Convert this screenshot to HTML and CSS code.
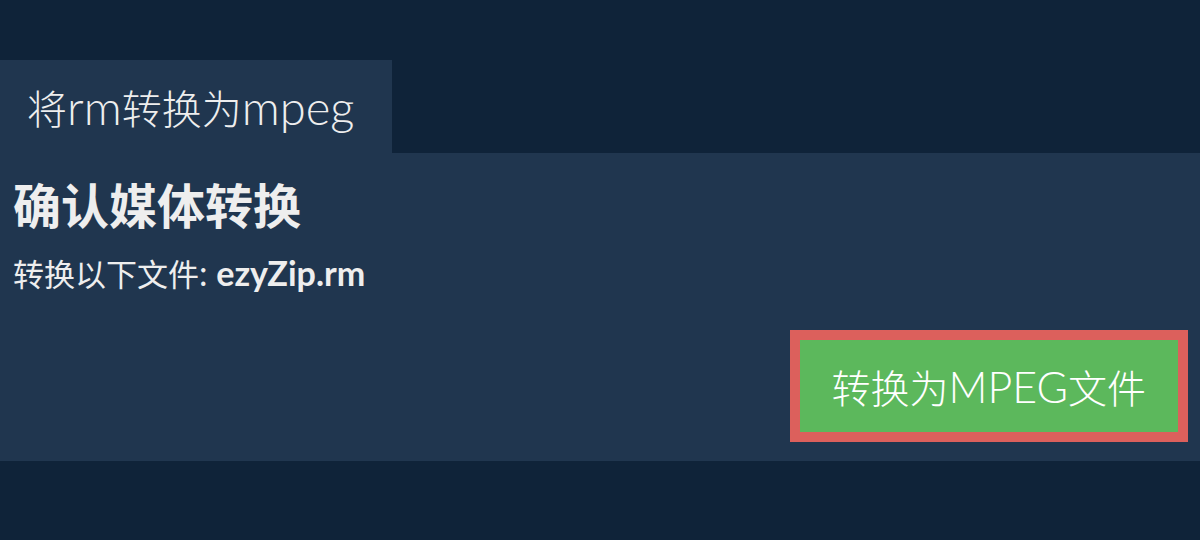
FILE: index.html
```html
<!DOCTYPE html>
<html lang="zh">
<head>
  <meta charset="UTF-8">
  <meta name="viewport" content="width=device-width, initial-scale=1.0">
  <title>将rm转换为mpeg</title>
  <link rel="stylesheet" href="styles.css">
</head>
<body>
  <div class="tabs">
    <div class="tab">将<span class="latin">rm</span>转换为<span class="latin">mpeg</span></div>
  </div>
  <div class="panel">
    <h1 class="title">确认媒体转换</h1>
    <p class="file-line">转换以下文件<span class="latin">: <b class="file-name">ezyZip.rm</b></span></p>
    <div class="actions">
      <button class="convert-btn" type="button">转换为<span class="latin">MPEG</span>文件</button>
    </div>
  </div>
</body>
</html>
```

FILE: styles.css
```css
body {
  margin: 0;
  background-color: #0f2339;
  color: #eeeeee;
  font-family: "Lato", "Noto Sans CJK SC", sans-serif;
}
/* latin runs are drawn a bit larger than the CJK glyphs */
.latin {
  font-size: 1.1em;
}
.tabs {
  padding-top: 60px;
  display: flex;
}
.tab {
  background-color: #20364f;
  height: 93px;
  padding: 0 38px 0 27px;
  display: flex;
  align-items: center;
  font-size: 40px;
  font-weight: 300;
}
.tab .latin {
  font-size: 1.18em;
}
.panel {
  background-color: #20364f;
  padding: 25px 12px 19px 13px;
}
.title {
  margin: 0;
  font-size: 48px;
  line-height: 56px;
  font-weight: 700;
}
.file-line {
  margin: 19px 0 0;
  font-size: 31px;
  line-height: 40px;
}
.file-name {
  font-weight: 700;
}
.actions {
  display: flex;
  justify-content: flex-end;
  margin-top: 36px;
}
.convert-btn {
  background-color: #5cb85c;
  color: #ffffff;
  border: 10px solid #dc605c;
  height: 112px;
  padding: 0 32px;
  font-family: "Lato", "Noto Sans CJK SC", sans-serif;
  font-size: 39px;
  font-weight: 300;
  cursor: pointer;
}
```
